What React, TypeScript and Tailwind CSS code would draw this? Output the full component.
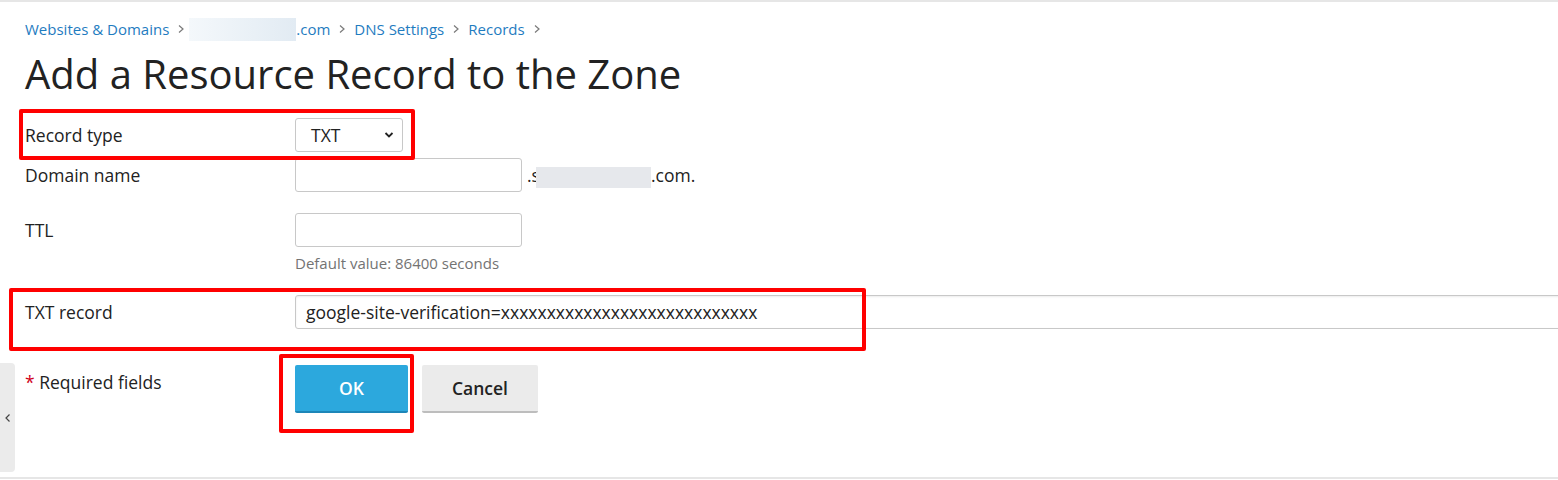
import React from "react";

const Chev = () => (
  <svg width="8" height="12" viewBox="0 0 8 12" className="mx-[8px]" aria-hidden>
    <path d="M2 2.5 L6 6 L2 9.5" fill="none" stroke="#7a7a7a" strokeWidth="1.2" />
  </svg>
);

export default function App() {
  return (
    <div
      className="relative w-[1558px] h-[480px] overflow-hidden bg-white text-[#222]"
      style={{ fontFamily: '"Open Sans", "Noto Sans", sans-serif' }}
    >
      <div className="h-[2px] bg-[#e6e6e6]" />
      {/* sidebar toggle */}
      <div className="absolute left-0 top-[363px] w-[15px] h-[109px] bg-[#ebebeb] rounded-r-[4px] flex items-center justify-center">
        <svg width="8" height="12" viewBox="0 0 8 12" aria-hidden>
          <path d="M5.5 2.5 L2 6 L5.5 9.5" fill="none" stroke="#444" strokeWidth="1.2" />
        </svg>
      </div>
      <div className="absolute left-0 right-0 top-[477px] h-[2px] bg-[#e6e6e6]" />

      <div className="pl-[25px]">
        {/* breadcrumb */}
        <div className="flex items-center h-[20px] mt-[17px] text-[15px] text-[#1f7cbf]">
          <span>Websites &amp; Domains</span>
          <Chev />
          <span className="inline-block -ml-[4px] w-[107px] h-[23px] bg-gradient-to-r from-[#f4f8fb] to-[#e2ebf3]" />
          <span>.com</span>
          <Chev />
          <span>DNS Settings</span>
          <Chev />
          <span>Records</span>
          <Chev />
        </div>
        {/* title */}
        <h1 className="mt-[9px] text-[40px] leading-[52px] font-normal text-[#222]">
          Add a Resource Record to the Zone
        </h1>

        <div className="mt-[18px] flex flex-col text-[17.5px]">
          {/* record type */}
          <div className="flex items-center h-[34px]">
            <div className="w-[270px] shrink-0">Record type</div>
            <div className="w-[108px] h-[34px] shrink-0 border border-[#c8c8c8] rounded-[3px] flex items-center justify-between pl-[15px] pr-[8px] text-[#222]">
              <span>TXT</span>
              <svg width="10" height="8" viewBox="0 0 10 8" aria-hidden>
                <path d="M1.5 2 L5 5.5 L8.5 2" fill="none" stroke="#222" strokeWidth="1.8" />
              </svg>
            </div>
          </div>
          {/* domain name */}
          <div className="flex items-center h-[34px] mt-[6px]">
            <div className="w-[270px] shrink-0">Domain name</div>
            <div className="w-[227px] h-[34px] shrink-0 border border-[#c8c8c8] rounded-[3px]" />
            <span className="ml-[5px] flex items-center">
              <span>.s</span>
              <span className="inline-block -ml-[4px] w-[115px] h-[21px] mt-[4px] bg-[#e6e8ec]" />
              <span>.com.</span>
            </span>
          </div>
          {/* TTL */}
          <div className="flex items-center h-[34px] mt-[21px]">
            <div className="w-[270px] shrink-0">TTL</div>
            <div className="w-[227px] h-[34px] shrink-0 border border-[#c8c8c8] rounded-[3px]" />
          </div>
          <div className="ml-[270px] mt-[6px] text-[15px] leading-[20px] text-[#737373]">
            Default value: 86400 seconds
          </div>
          {/* TXT record */}
          <div className="flex items-center h-[34px] mt-[22px]">
            <div className="w-[270px] shrink-0">TXT record</div>
            <div className="w-[1300px] h-[34px] shrink-0 border border-[#c8c8c8] rounded-[3px] shadow-[inset_0_1px_2px_rgba(0,0,0,0.08)] flex items-center pl-[10px] text-[#222]">
              google-site-verification=xxxxxxxxxxxxxxxxxxxxxxxxxxxx
            </div>
          </div>
          {/* buttons */}
          <div className="flex items-start mt-[36px]">
            <div className="w-[270px] shrink-0 pt-[4px]">
              <span className="text-[#d0021b]">*</span> Required fields
            </div>
            <button className="w-[113px] h-[48px] shrink-0 bg-[#2ca8dd] border-b-2 border-[#1d86b8] rounded-[2px] text-white font-semibold text-[17.5px]">
              OK
            </button>
            <button className="ml-[14px] w-[116px] h-[48px] shrink-0 bg-[#ebebeb] border-b-2 border-[#bdbdbd] rounded-[2px] text-[#222] font-semibold text-[17.5px]">
              Cancel
            </button>
          </div>
        </div>
      </div>

      {/* red annotation boxes */}
      <div className="absolute left-[19px] top-[109px] w-[396px] h-[51px] border-[4px] border-[#ff0000] rounded-[2px]" />
      <div className="absolute left-[9px] top-[288px] w-[857px] h-[63px] border-[4px] border-[#ff0000] rounded-[2px]" />
      <div className="absolute left-[279px] top-[354px] w-[135px] h-[79px] border-[4px] border-[#ff0000] rounded-[2px]" />
    </div>
  );
}
